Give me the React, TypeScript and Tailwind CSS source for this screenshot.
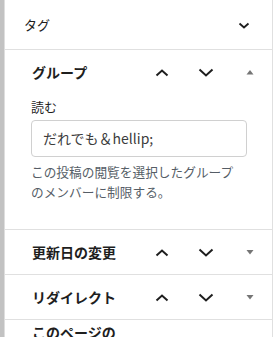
const font = { fontFamily: '"Noto Sans CJK JP", "Noto Sans", sans-serif' };

const Up = () => (
  <svg width="24" height="24" viewBox="0 0 24 24" fill="none">
    <path d="M6.5 15.5 12 10.5l5.5 5" stroke="#1e1e1e" strokeWidth="2" />
  </svg>
);

const Down = () => (
  <svg width="24" height="24" viewBox="0 0 24 24" fill="none">
    <path d="M5.5 9.5 12 15.5l6.5-6" stroke="#1e1e1e" strokeWidth="2" />
  </svg>
);

const Tri = ({ up }: { up?: boolean }) => (
  <svg width="10" height="8" viewBox="0 0 10 8">
    {up ? (
      <path d="M1.5 6.5 5 2l3.5 4.5z" fill="#757575" />
    ) : (
      <path d="M1.5 2h7L5 6.5z" fill="#757575" />
    )}
  </svg>
);

const PanelHeader = ({ title, open }: { title: string; open?: boolean }) => (
  <div className="flex items-center h-[44px]">
    <div className="flex-1 pl-[27px] text-[14px] font-bold text-[#1e1e1e]">{title}</div>
    <div className="flex w-[44px] justify-center"><Up /></div>
    <div className="flex w-[44px] justify-center"><Down /></div>
    <div className="flex w-[44px] justify-center"><Tri up={open} /></div>
  </div>
);

export default function App() {
  return (
    <div className="flex w-[277px] h-[337px] overflow-hidden bg-white" style={font}>
      <div className="w-[4px] bg-[#c2c2c2] border-r border-[#dedede] box-content" />
      <div className="flex-1 flex flex-col border-r border-[#e0e0e0] mr-[4px]">
        {/* タグ */}
        <div className="flex items-center h-[50px] border-b border-[#e0e0e0] shrink-0">
          <div className="flex-1 pl-[19px] text-[13px] text-[#1e1e1e]">タグ</div>
          <div className="mr-[16px] flex"><svg width="24" height="24" viewBox="0 0 24 24" fill="none">
            <path d="M7.5 10.5 12 14.5l4.5-4" stroke="#1e1e1e" strokeWidth="1.8" />
          </svg></div>
        </div>

        {/* グループ */}
        <div className="border-b border-[#e0e0e0] h-[180px] shrink-0">
          <PanelHeader title="グループ" open />
          <div className="pl-[26px] pr-[24px]">
            <div className="text-[13px] text-[#1e1e1e] leading-[18px] mt-[4px]">読む</div>
            <div className="mt-[4px] h-[37px] w-[216px] rounded-[4px] border border-[#d0d0d0] flex items-center pl-[11px] text-[14px] text-[#3c3c3c]">
              だれでも＆hellip;
            </div>
            <p className="mt-[5px] text-[12.7px] leading-[20px] text-[#555d66]">
              この投稿の閲覧を選択したグループ
              <br />
              のメンバーに制限する。
            </p>
          </div>
        </div>

        <div className="border-b border-[#e0e0e0] shrink-0">
          <PanelHeader title="更新日の変更" />
        </div>
        <div className="border-b border-[#e0e0e0] shrink-0">
          <PanelHeader title="リダイレクト" />
        </div>
        <div className="pl-[27px] pt-[2px] text-[14px] font-bold text-[#1e1e1e] leading-[20px]">
          このページの
        </div>
      </div>
    </div>
  );
}
